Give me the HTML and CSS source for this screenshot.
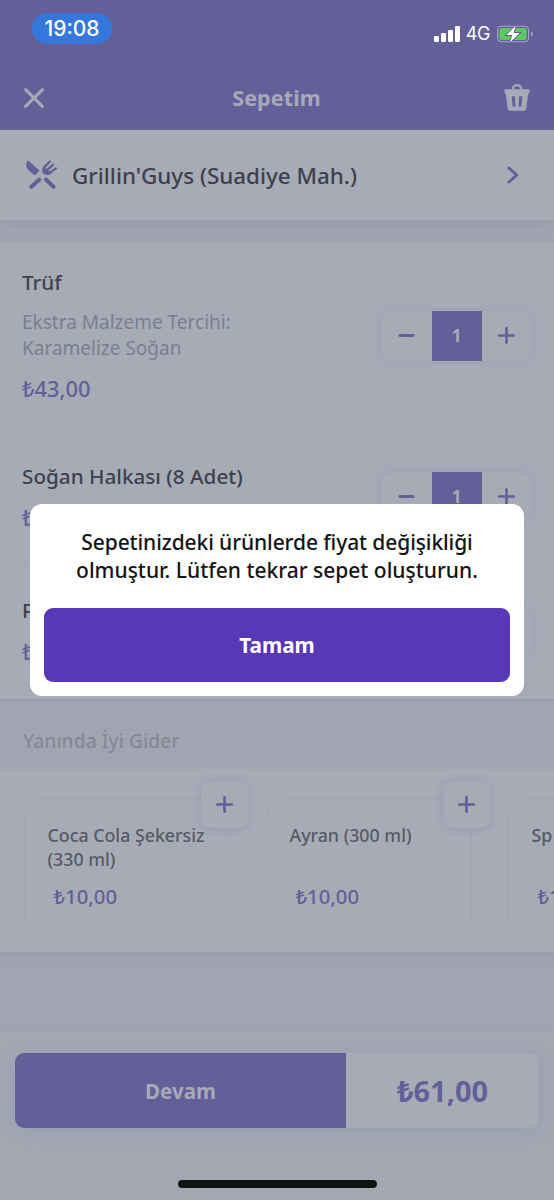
FILE: index.html
```html
<!DOCTYPE html>
<html lang="tr">
<head>
<meta charset="utf-8">
<meta name="viewport" content="width=device-width, initial-scale=1">
<title>Sepetim</title>
<link rel="stylesheet" href="styles.css">
</head>
<body>
<svg class="defs" aria-hidden="true">
  <symbol id="plus" viewBox="0 0 16 16"><path d="M8 1.2v13.6M1.2 8h13.6" fill="none" stroke="currentColor" stroke-width="2.5" stroke-linecap="round"/></symbol>
  <symbol id="minus" viewBox="0 0 16 16"><path d="M1.9 8h12.2" fill="none" stroke="currentColor" stroke-width="2.7" stroke-linecap="round"/></symbol>
</svg>
<div class="screen">
  <header class="header">
    <div class="status">
      <span class="clock">19:08</span>
      <div class="status-icons">
        <svg width="26" height="16" viewBox="0 0 26 16" fill="#fff"><rect x="0" y="10" width="5" height="6" rx="1.3"/><rect x="7" y="7" width="5" height="9" rx="1.3"/><rect x="14" y="4" width="5" height="12" rx="1.3"/><rect x="21" y="0" width="5" height="16" rx="1.3"/></svg>
        <span class="network">4G</span>
        <svg class="battery" width="36" height="20" viewBox="0 0 36 20"><rect x=".6" y="2.2" width="31" height="15.6" rx="4" fill="none" stroke="#aaa7cb" stroke-width="1.1"/><path d="M34 7.4c2.4.8 2.4 4.4 0 5.2z" fill="#aaa7cb"/><rect x="2.4" y="4" width="27.4" height="12" rx="2.2" fill="#5cc860"/><path d="M18.8 1.5 9.5 11h5.8l-2.5 7.8L22.6 9h-6z" fill="#fff" stroke="#645f98" stroke-width="1.8" paint-order="stroke"/></svg>
      </div>
    </div>
    <div class="titlebar">
      <svg class="close" width="20" height="20" viewBox="0 0 20 20"><path d="M1.6 1.6l16.8 16.8M18.4 1.6L1.6 18.4" stroke="currentColor" stroke-width="3" stroke-linecap="round"/></svg>
      <h1 class="title">Sepetim</h1>
      <svg class="trash" width="26" height="28" viewBox="0 0 26 28"><path d="M9 5.5V4.5a4 3.3 0 0 1 8 0v1" fill="none" stroke="currentColor" stroke-width="2.2"/><path d="M.5 5.2h25v4.2h-1.3l-1.9 15.4a2.3 2.3 0 0 1-2.3 2H6a2.3 2.3 0 0 1-2.3-2L1.8 9.4H.5z" fill="currentColor"/><path d="M7.7 12.2h3.2l.5 10.6H8.7zM15.1 12.2h3.2l-1 10.6h-2.7z" fill="#645f98"/></svg>
    </div>
  </header>

  <section class="restaurant">
    <svg class="cutlery" width="32" height="30" viewBox="0 0 32 30"><path d="M2 1.4C.1 4.3.9 7.7 3.7 10.3l5.2 4.1 3.6-3.7z" fill="currentColor" stroke="currentColor" stroke-width="1.5" stroke-linejoin="round"/><path d="M13.3 19.5l-8 7.300M20 19.5l7.600 7.300" fill="none" stroke="currentColor" stroke-width="4" stroke-linecap="round"/><path d="M23.6 1.7 18.6 7M27.1 4.7 21.5 9.6M30 8.3l-5.7 4.1" fill="none" stroke="currentColor" stroke-width="2.2" stroke-linecap="round"/><path d="M18.6 7c-2 2.3-1.5 5.2.3 6.2s3.7.6 5.4-.8" fill="none" stroke="currentColor" stroke-width="2.6" stroke-linecap="round"/><path d="M18.3 9.3l2.3-1 3 3-1.1 2.3-3.5.2z" fill="currentColor"/></svg>
    <h2 class="restaurant-name">Grillin'Guys (Suadiye Mah.)</h2>
    <svg class="chevron" width="12" height="18" viewBox="0 0 12 18"><path d="M2 2l7.6 7L2 16" fill="none" stroke="currentColor" stroke-width="3" stroke-linecap="round"/></svg>
  </section>

  <main class="items">
    <article class="item item-tall">
      <div class="item-info">
        <h3 class="item-name">Trüf</h3>
        <p class="item-note">Ekstra Malzeme Tercihi:<br>Karamelize Soğan</p>
        <p class="price">₺43,00</p>
      </div>
      <div class="stepper"><button class="step"><svg><use href="#minus"/></svg></button><span class="count">1</span><button class="step"><svg><use href="#plus"/></svg></button></div>
    </article>
    <article class="item">
      <div class="item-info">
        <h3 class="item-name">Soğan Halkası (8 Adet)</h3>
        <p class="price">₺9,00</p>
      </div>
      <div class="stepper"><button class="step"><svg><use href="#minus"/></svg></button><span class="count">1</span><button class="step"><svg><use href="#plus"/></svg></button></div>
    </article>
    <article class="item">
      <div class="item-info">
        <h3 class="item-name">P</h3>
        <p class="price">₺9,00</p>
      </div>
      <div class="stepper"><button class="step"><svg><use href="#minus"/></svg></button><span class="count">1</span><button class="step"><svg><use href="#plus"/></svg></button></div>
    </article>
  </main>

  <h2 class="strip">Yanında İyi Gider</h2>
  <section class="suggestions">
    <article class="card"><button class="add"><svg><use href="#plus"/></svg></button><p class="card-name">Coca Cola Şekersiz (330 ml)</p><p class="card-price">₺10,00</p></article>
    <article class="card"><button class="add"><svg><use href="#plus"/></svg></button><p class="card-name">Ayran (300 ml)</p><p class="card-price">₺10,00</p></article>
    <article class="card"><p class="card-name">Sp</p><p class="card-price">₺10,00</p></article>
  </section>

  <footer class="footer">
    <div class="checkout"><button class="continue">Devam</button><span class="total">₺61,00</span></div>
    <div class="home-bar"></div>
  </footer>

  <div class="dialog" role="alertdialog">
    <p class="message"><span class="line-tight">Sepetinizdeki ürünlerde fiyat değişikliği</span><br>olmuştur. Lütfen tekrar sepet oluşturun.</p>
    <button class="ok">Tamam</button>
  </div>
</div>
</body>
</html>
```
FILE: styles.css
```css
* { box-sizing: border-box; }
body { margin: 0; font-family: "Noto Sans", "Open Sans", sans-serif; }
h1, h2, h3, p { margin: 0; }
button { border: 0; padding: 0; background: none; font: inherit; color: inherit; }
svg { display: block; flex: none; }
.defs { position: absolute; width: 0; height: 0; }

.screen { position: relative; width: 554px; height: 1200px; overflow: hidden; display: flex; flex-direction: column; background: #a1a5b1; color: #3e414d; }

.header { height: 130px; flex: none; background: #645f98; color: #a7a9b9; }
.status { height: 65px; display: flex; justify-content: space-between; align-items: flex-start; padding: 13px 21px 0 32px; }
.clock { width: 80px; height: 31px; border-radius: 16px; background: #3478de; color: #fff; font: 500 21px/32px Inter, sans-serif; text-align: center; }
.status-icons { display: flex; align-items: center; padding-top: 11px; color: #fff; }
.network { font: 400 18px/20px Inter, sans-serif; letter-spacing: -.4px; margin: 0 7px 0 6px; }
.titlebar { height: 65px; display: flex; align-items: center; justify-content: space-between; padding: 0 24px; }
.title { font-size: 21.5px; font-weight: 700; line-height: 30px; letter-spacing: .1px; padding-left: 5px; margin-top: 1px; }

.restaurant { height: 90px; flex: none; display: flex; align-items: center; padding: 0 35px 0 26px; background: #a7abb6; box-shadow: 0 2px 14px rgba(120, 128, 146, .35); color: #645f98; }
.restaurant-name { flex: 1; margin: 1px 0 0 14px; font-size: 22.4px; font-weight: 500; line-height: 30px; color: #3e414d; }

.items { height: 457px; flex: none; margin-top: 22px; padding: 0 22px; background: #a7abb6; box-shadow: 0 1px 3px rgba(110, 117, 136, .3); }
.item { height: 134px; display: flex; align-items: center; justify-content: space-between; border-bottom: 1px solid #a0a5b3; }
.item:last-child { border-bottom: 0; }
.item-tall { height: 188px; }
.item-name { font-size: 20.7px; font-weight: 500; line-height: 28px; }
.item-note { margin-top: 13px; font-size: 19px; line-height: 26px; color: #7a7f91; }
.price { margin-top: 14px; font-size: 21.9px; font-weight: 500; line-height: 28px; color: #645f98; }

.stepper { display: flex; width: 151px; height: 50px; border-radius: 14px; background: #a7abb6; box-shadow: 0 0 10px rgba(137, 151, 187, .5); color: #645f98; }
.step { flex: 1; display: flex; align-items: center; justify-content: center; }
.step svg, .add svg { width: 17px; height: 17px; }
.count { width: 50px; background: #645f98; color: #a7a9b9; font-size: 17px; font-weight: 700; line-height: 50px; text-align: center; }

.strip { height: 70px; flex: none; padding: 28px 23px 0; font-size: 19.3px; font-weight: 500; line-height: 28px; color: #858995; }

.suggestions { height: 183px; flex: none; display: flex; gap: 36px; padding: 30px 0 0 24px; background: #a7abb6; box-shadow: 0 2px 14px rgba(120, 128, 146, .35); clip-path: inset(0 0 -24px 0); }
.card { position: relative; flex: none; width: 206px; height: 136px; padding: 23px 16px 0 22.5px; border: 1px solid #a1a5b1; border-radius: 21px; }
.card-name { height: 48px; font-size: 17.8px; font-weight: 500; line-height: 24px; color: #565a67; }
.card-price { margin: 11px 0 0 6px; font-size: 20.3px; font-weight: 500; line-height: 28px; color: #645f98; }
.add { position: absolute; top: -19px; right: -19px; width: 47px; height: 47px; border-radius: 9px; display: flex; align-items: center; justify-content: center; background: #a7abb6; box-shadow: 0 1px 7px rgba(117, 117, 167, .38); color: #645f98; }

.footer { margin-top: auto; height: 169px; flex: none; padding: 22px 15px 0; background: #a3a7b2; box-shadow: 0 -1px 6px rgba(130, 137, 152, .15); }
.checkout { display: flex; height: 75px; border-radius: 9px; overflow: hidden; background: #a7abb6; box-shadow: 0 2px 16px rgba(133, 151, 186, .45); }
.continue { width: 331px; background: #645f98; color: #a7a9b9; font-size: 20.5px; font-weight: 700; }
.total { flex: 1; text-align: center; font-size: 29px; font-weight: 700; line-height: 76px; color: #645f98; }
.home-bar { width: 199px; height: 8px; margin: 52px auto 0; border-radius: 4px; background: #121214; }

.dialog { position: absolute; left: 30px; top: 504px; width: 494px; height: 192px; padding: 24px 14px 14px; border-radius: 12px; background: #fff; color: #141416; }
.message { font-size: 21px; font-weight: 500; line-height: 28px; text-align: center; }
.line-tight { letter-spacing: -.1px; }
.ok { display: block; width: 100%; height: 74px; margin-top: 24px; border-radius: 9px; background: #5838b6; color: #fff; font-size: 20.7px; font-weight: 700; }
```
